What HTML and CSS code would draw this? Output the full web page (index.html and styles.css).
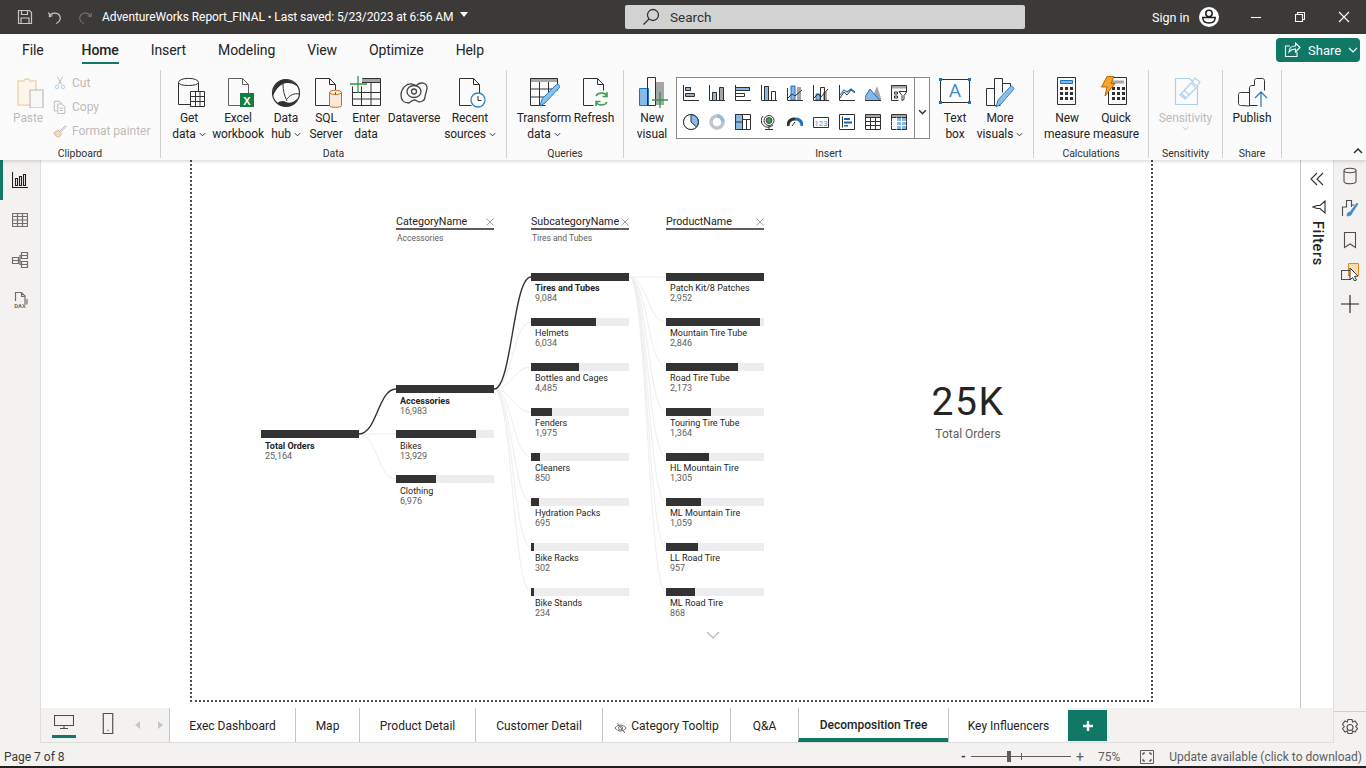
FILE: index.html
```html
<!DOCTYPE html>
<html lang="en">
<head>
<meta charset="utf-8">
<title>AdventureWorks Report_FINAL</title>
<link rel="stylesheet" href="styles.css">
</head>
<body>
<div class="app">
  <header class="titlebar">
    <div class="qa">
      <svg class="i15" viewBox="0 0 16 16"><path class="tl" d="M1.500 1.500h11l2 2v11h-13zM4.500 1.500v4h6v-4M4 14.500v-5.500h8v5.500"/></svg>
      <svg class="i15" viewBox="0 0 16 16"><path class="tl" d="M3 7l-1.500-3.500M2 8l3.500-1.500M2 7.500c2-4 9-5 11 0 1 3-1 6-4 7"/></svg>
      <svg class="i15" viewBox="0 0 16 16"><path class="tm" d="M14 8l-3.500-1.500M14 8l.5-4M14 7.500c-2-4-9-5-11 0-1 3 1 6 4 7"/></svg>
    </div>
    <div class="doc-title">AdventureWorks Report_FINAL <span class="dot">•</span> Last saved: 5/23/2023 at 6:56 AM</div>
    <span class="title-caret"></span>
    <div class="search">
      <svg class="i18" viewBox="0 0 18 18"><circle class="sr" cx="11" cy="7" r="5.500"/><path class="sr" d="M7 11l-5.500 5.500"/></svg>
      <span>Search</span>
    </div>
    <div class="signin">
      <span>Sign in</span>
      <svg class="i20" viewBox="0 0 20 20"><circle cx="10" cy="10" r="10" class="wf"/><circle class="bs" cx="10" cy="6.500" r="3.200"/><path class="bs" d="M3.800 10.500h12.400c0 3.500-2.500 5.500-6.200 5.500s-6.200-2-6.200-5.500z"/></svg>
    </div>
    <div class="winctl">
      <svg class="i12" viewBox="0 0 12 12"><path class="wl" d="M1 6.500h10"/></svg>
      <svg class="i12" viewBox="0 0 12 12"><path class="wl" d="M1.500 3.500h7v7h-7zM3.500 3.500v-2h7v7h-2"/></svg>
      <svg class="i12" viewBox="0 0 12 12"><path class="wl" d="M1 1l10 10M11 1l-10 10"/></svg>
    </div>
  </header>

  <section class="ribbon">
    <nav class="rtabs">
      <span class="rtab rtab-file">File</span>
      <span class="rtab rtab-on">Home</span>
      <span class="rtab">Insert</span>
      <span class="rtab">Modeling</span>
      <span class="rtab">View</span>
      <span class="rtab">Optimize</span>
      <span class="rtab">Help</span>
      <button class="share">
        <svg class="i18" viewBox="0 0 18 18"><path class="wl" d="M7 5H2.500v10.500H14V11M6 11c0-4 3-6 6.500-6V2l4.500 4.500-4.500 4.500V8C9.500 8 7.500 9 6 11z"/></svg>
        <span>Share</span>
        <svg class="i10" viewBox="0 0 10 10"><path class="wl" d="M1 3l4 4 4-4"/></svg>
      </button>
    </nav>
    <div class="groups">
      <div class="group g-clip">
        <div class="gbody clip-body">
          <div class="btn btn-off">
            <svg class="ico" viewBox="0 0 32 32"><path class="po" d="M6 5h6c0-3 6-3 6 0h6v24H6z"/><path class="pf" d="M18 14h13v18H18z"/><path class="dl" d="M18 14h13v18H18z"/></svg>
            <span class="lb">Paste</span>
          </div>
          <div class="clip-list">
            <div class="mini"><svg class="i14" viewBox="0 0 14 16"><path class="dg" d="M4 1l5 9M10 1l-5 9"/><circle class="db" cx="3.500" cy="12.500" r="2"/><circle class="db" cx="10.500" cy="12.500" r="2"/></svg><span>Cut</span></div>
            <div class="mini"><svg class="i14" viewBox="0 0 14 16"><path class="dg" d="M.5 1.500h6l2 2v1M.5 1.500v11h3M4.500 4.500h5l3 3v8h-8zM6.500 9.500h4M6.500 12h4"/></svg><span>Copy</span></div>
            <div class="mini"><svg class="i14" viewBox="0 0 16 16"><path class="df" d="M1 10l5-3 4 4-3 4c-3 0-5-2-6-5z"/><path class="dg" d="M8 8l6-6 1 1-6 6"/></svg><span>Format painter</span></div>
          </div>
        </div>
        <div class="glabel">Clipboard</div>
      </div>

      <div class="group g-data">
        <div class="gbody data-body">
          <div class="btn">
            <svg class="ico" viewBox="0 0 32 32"><path class="ln" d="M5.500 6.500c0-5.500 20-5.500 20 0v22h-20zM5.500 6.500c0 4 20 4 20 0"/><path class="wh" d="M17.500 15.500h14v15h-14z"/><path class="ln" d="M17.500 15.500h14v15h-14zM17.500 20.500h14M17.500 25.500h14M22.500 15.500v15M27 15.500v15"/></svg>
            <span class="lb">Get</span><span class="lb">data <svg class="car" viewBox="0 0 8 5"><path class="cl" d="M1 1l3 3 3-3"/></svg></span>
          </div>
          <div class="btn">
            <svg class="ico" viewBox="0 0 32 32"><path class="lg" d="M6.500 2.500h14l6 6v21h-20zM20.500 2.500v6h6"/><path class="xl" d="M18 17h14v14H18z"/><text class="xt" x="25" y="28.500">X</text></svg>
            <span class="lb">Excel</span><span class="lb">workbook</span>
          </div>
          <div class="btn">
            <svg class="ico" viewBox="0 0 32 32"><circle class="dr" cx="16" cy="17" r="13.500"/><path class="da" d="M3 20C2 10 9 3 16 3.500c5 .5 9 3 11.500 7-4-3-8-4-11-3.500C10 8 6 13 3 20z"/><path class="da" d="M7 27c3-2 6-3 9-1 4 2 8 0 12-4-2 5-7 8.500-12 8.500-4 0-7-1.500-9-3.500z"/><path class="lk" d="M13 8c0 6 1 11 4 17M17 23c3-4 7-6 12-5"/></svg>
            <span class="lb">Data</span><span class="lb">hub <svg class="car" viewBox="0 0 8 5"><path class="cl" d="M1 1l3 3 3-3"/></svg></span>
          </div>
          <div class="btn">
            <svg class="ico" viewBox="0 0 32 32"><path class="ln" d="M5.500 29.500v-27h14l6 6v21zM19.500 2.500v6h6"/><path class="or" d="M19.500 16.500c0-3 12-3 12 0v13c0 2.500-12 2.500-12 0zM19.500 16.500c0 2.500 12 2.500 12 0"/></svg>
            <span class="lb">SQL</span><span class="lb">Server</span>
          </div>
          <div class="btn">
            <svg class="ico" viewBox="0 0 32 32"><path class="gy" d="M12 2h18v4H12z"/><path class="ln" d="M2.500 10.500v19h28v-27h-18M2.500 16.500h28M2.500 23h28M11.500 10.500v19M21 6.500v23M12 6.500h18.500"/><path class="gn" d="M8 0v17M0 8h17"/></svg>
            <span class="lb">Enter</span><span class="lb">data</span>
          </div>
          <div class="btn">
            <svg class="ico" viewBox="0 0 32 32"><path class="sw" d="M11 27c-6 0-8-4-8-8 0-6 5-12 11-11 3 1 4 2 5 1 3-3 10-3 10 3 0 4-2 6-2 9 0 4-5 6-8 4-3-2-4-1-8 2z"/><ellipse class="sw" cx="16" cy="15.500" rx="7" ry="6"/><circle class="sw" cx="16" cy="15.500" r="2.500"/></svg>
            <span class="lb">Dataverse</span>
          </div>
          <div class="btn">
            <svg class="ico" viewBox="0 0 32 32"><path class="ln" d="M5.500 29.500v-27h14l6 6v12M19.500 2.500v6h6M5.500 29.500h12"/><circle class="cb" cx="24" cy="24" r="7"/><path class="ln" d="M24 20v4.500h3.500"/></svg>
            <span class="lb">Recent</span><span class="lb">sources <svg class="car" viewBox="0 0 8 5"><path class="cl" d="M1 1l3 3 3-3"/></svg></span>
          </div>
        </div>
        <div class="glabel">Data</div>
      </div>

      <div class="group g-query">
        <div class="gbody query-body">
          <div class="btn">
            <svg class="ico" viewBox="0 0 32 32"><path class="gy" d="M2 2h28v4H2z"/><path class="ln" d="M2.500 2.500h27v12M2.500 2.500v27h15M2.500 13h22M2.500 21h17M11.500 6v23M20.500 6v14"/><path class="pn" d="M12 30l2-7L28 9c1-1 2-1 3 0s1 2 0 3L17 27z"/></svg>
            <span class="lb">Transform</span><span class="lb">data <svg class="car" viewBox="0 0 8 5"><path class="cl" d="M1 1l3 3 3-3"/></svg></span>
          </div>
          <div class="btn">
            <svg class="ico" viewBox="0 0 32 32"><path class="ln" d="M5.500 29.500v-27h14l6 6v6M19.500 2.500v6h6M5.500 29.500h10"/><path class="gt" d="M18 20c2-4 9-4 11 0M29 26c-2 4-9 4-11 0M29 16v4.500h-4.500M18 30v-4.500h4.500"/></svg>
            <span class="lb">Refresh</span>
          </div>
        </div>
        <div class="glabel">Queries</div>
      </div>

      <div class="group g-insert">
        <div class="gbody insert-body">
          <div class="btn">
            <svg class="ico" viewBox="0 0 32 32"><path class="bf" d="M3.500 12.500h9v17h-9z"/><path class="gy" d="M20 6h8v23h-8z"/><path class="ln" d="M11.500 1.500h8v28h-8z"/><path class="gn" d="M24 16v17M16 24h16"/></svg>
            <span class="lb">New</span><span class="lb">visual</span>
          </div>
          <div class="gallery">
            <div class="gal-grid">
              <svg class="i16" viewBox="0 0 16 16"><path class="bf" d="M2.500 2.500h5v3h-5z"/><path class="gy" d="M2.500 8.500h9v3h-9z"/><path class="ln" d="M.5 0v15.500H16M2.500 2.500h5v3h-5zM2.500 8.500h9v3h-9z"/></svg>
              <svg class="i16" viewBox="0 0 16 16"><path class="bf" d="M3.500 7.500h4v8h-4z"/><path class="gy" d="M10.500 2.500h4v13h-4z"/><path class="ln" d="M.5 0v15.500H16M3.500 7.500h4v8h-4zM10.500 2.500h4v13h-4z"/></svg>
              <svg class="i16" viewBox="0 0 16 16"><path class="bf" d="M.5 2.500h14v3H.500z"/><path class="ln" d="M.5 0v15.500H16M.5 2.500h14v3H.500zM.5 8.500h9v3H.500z"/></svg>
              <svg class="i16" viewBox="0 0 16 16"><path class="bf" d="M3.500 1.500h4v14h-4z"/><path class="ln" d="M.5 0v15.500H16M3.500 1.500h4v14h-4zM10.500 6.500h4v9h-4z"/></svg>
              <svg class="i16" viewBox="0 0 16 16"><path class="bf" d="M4 1h4v14H4z"/><path class="gy" d="M10 2h4v13h-4z"/><path class="lk" d="M.5 3v12.500H16M1 13l4-4 3 2 7-6"/></svg>
              <svg class="i16" viewBox="0 0 16 16"><path class="bf" d="M3 9h4v6H3z"/><path class="gy" d="M10 7h4v8h-4z"/><path class="lk" d="M.5 0v15.500H16M7.500 2.500h4v13h-4zM1 13l4-4 3 3 7-8"/></svg>
              <svg class="i16" viewBox="0 0 16 16"><path class="ln" d="M.5 0v15.500H16M1 13l4-6 3 3 4-5 4 3"/><path class="bl" d="M1 10l4-5 3 2 4-3 4 3"/></svg>
              <svg class="i16" viewBox="0 0 16 16"><path class="gy" d="M8 11l4-10 4 12v3H9z"/><path class="bf" d="M0 15.500V12L5 4l4 5 3 3 3 3.500z"/><path class="ln" d="M0 15.500h16"/></svg>
              <svg class="i16" viewBox="0 0 16 16"><path class="gy" d="M.5.500h15v3H.500z"/><path class="lk" d="M.5 15.500V.500h15v6M.5 15.500h7M3.500 7h3v2h-3zM3.500 11h3v2h-3z"/><path class="lk" d="M8 6.500h8l-3 4v4l-2 1v-5z"/></svg>
              <svg class="i16" viewBox="0 0 16 16"><circle class="bf" cx="8" cy="8" r="7.500"/><path class="wh" d="M8 .5A7.500 7.500 0 0 0 .5 8 7.500 7.500 0 0 0 13.500 13L8 8z"/><circle class="lk" cx="8" cy="8" r="7.500"/><path class="lk" d="M8 1v7l5.500 5"/></svg>
              <svg class="i16" viewBox="0 0 16 16"><circle class="rg" cx="8" cy="8" r="6"/><path class="rb" d="M8 2a6 6 0 0 1 6 6"/></svg>
              <svg class="i16" viewBox="0 0 16 16"><path class="bf" d="M.5.500h7v15h-7z"/><path class="ln" d="M.5.500h15v15H.500zM7.500.500v15M.5 8h7M7.500 5.500h8M11.500 5.500v10"/></svg>
              <svg class="i16" viewBox="0 0 16 16"><circle class="ln" cx="8" cy="6.500" r="5"/><circle class="gb" cx="8" cy="6.500" r="3"/><path class="ln" d="M8 12v3M4 15.500h8M2 2a6.500 6.500 0 0 0 10 9"/></svg>
              <svg class="i16" viewBox="0 0 16 16"><path class="gu" d="M1 12c0-5 3-7 7-7"/><path class="gv" d="M8 5c4 0 7 2 7 7"/><path class="lk" d="M5 12l3-4"/></svg>
              <svg class="i16" viewBox="0 0 16 16"><path class="ln" d="M.5 3.500h15v10H.500z"/><text class="nm" x="8" y="11.500">123</text></svg>
              <svg class="i16" viewBox="0 0 16 16"><path class="ln" d="M.5.500h15v15H.500zM3.500 2.500v11"/><path class="bt" d="M5 4h6v2H5zM5 7.500h8v2H5zM5 11h4v1.500H5z"/></svg>
              <svg class="i16" viewBox="0 0 16 16"><path class="gy" d="M.5.500h15v3H.500z"/><path class="ln" d="M.5.500h15v15H.500zM.5 3.500h15M.5 7.500h15M.5 11.500h15M5.500 3.500v12M10.500 3.500v12"/></svg>
              <svg class="i16" viewBox="0 0 16 16"><path class="bf" d="M5.500 3.500h10v12h-10z"/><path class="gy" d="M.5.500h15v3H.500z"/><path class="ln" d="M.5.500h15v15H.500zM.5 3.500h15"/><path class="wd" d="M.5 7.500h15M.5 11.500h15M5.500 3.500v12M10.500 3.500v12"/></svg>
            </div>
            <div class="gal-more"><svg class="car2" viewBox="0 0 8 5"><path class="cl2" d="M1 1l3 3 3-3"/></svg></div>
          </div>
          <div class="btn">
            <svg class="ico" viewBox="0 0 32 32"><path class="tb" d="M1.500 3.500h29v23h-29z"/><path class="bd" d="M0 2h3v3H0zM29 2h3v3h-3zM0 25h3v3H0zM29 25h3v3h-3z"/><text class="ta" x="16" y="21">A</text></svg>
            <span class="lb">Text</span><span class="lb">box</span>
          </div>
          <div class="btn">
            <svg class="ico" viewBox="0 0 32 32"><path class="ln" d="M2.500 29.500v-17h8v17zM10.500 29.500v-27h8v14M18.500 7.500h8v5M10.500 29.500h6"/><path class="pn" d="M12 31l2-7L26 11c1-1 2-1 3 0s1 2 0 3L17 28z"/></svg>
            <span class="lb">More</span><span class="lb">visuals <svg class="car" viewBox="0 0 8 5"><path class="cl" d="M1 1l3 3 3-3"/></svg></span>
          </div>
        </div>
        <div class="glabel">Insert</div>
      </div>

      <div class="group g-calc">
        <div class="gbody calc-body">
          <div class="btn">
            <svg class="ico" viewBox="0 0 32 32"><path class="ln" d="M6.500 1.500h18v27h-18z"/><path class="bf" d="M9.500 4.500h12v3h-12z"/><path class="kk" d="M9 11h3v3H9zM14 11h3v3h-3zM19 11h3v3h-3zM9 16h3v3H9zM14 16h3v3h-3zM19 16h3v3h-3zM9 21h3v3H9zM14 21h3v3h-3zM19 21h3v3h-3z"/></svg>
            <span class="lb">New</span><span class="lb">measure</span>
          </div>
          <div class="btn">
            <svg class="ico" viewBox="0 0 32 32"><path class="ln" d="M8.500 1.500h18v27h-18z"/><path class="gy" d="M12 4.500h12v3H12z"/><path class="kk" d="M12 11h3v3h-3zM17 11h3v3h-3zM22 11h3v3h-3zM12 16h3v3h-3zM17 16h3v3h-3zM22 16h3v3h-3zM12 21h3v3h-3zM17 21h3v3h-3zM22 21h3v3h-3z"/><path class="zp" d="M7 .5h7l-3 7h4L5 20l2-9H1.500z"/></svg>
            <span class="lb">Quick</span><span class="lb">measure</span>
          </div>
        </div>
        <div class="glabel">Calculations</div>
      </div>

      <div class="group g-sens">
        <div class="gbody sens-body">
          <div class="btn btn-off">
            <svg class="ico" viewBox="0 0 32 32"><path class="sb" d="M5.500 2.500h14l8 7v19h-22z"/><path class="sc" d="M10 19L21 7l5 5-11 11zM22 6l3-4 5 4-3 4zM11 17l5 5M14 14l5 5"/></svg>
            <span class="lb">Sensitivity</span>
            <span class="lb"><svg class="car" viewBox="0 0 8 5"><path class="cd" d="M1 1l3 3 3-3"/></svg></span>
          </div>
        </div>
        <div class="glabel">Sensitivity</div>
      </div>

      <div class="group g-share">
        <div class="gbody share-body">
          <div class="btn">
            <svg class="ico" viewBox="0 0 32 32"><path class="ln" d="M5.500 29.500h-1c-1 0-2-1-2-2v-9c0-1 1-2 2-2h9v13.500zM13.500 16.500v-5c0-1 1-2 2-2h3v-5c0-1 1-2 2-2h6c1 0 2 1 2 2v10M13.500 29.500h8"/><path class="ar" d="M25 31V16M19 22l6-6 6 6"/></svg>
            <span class="lb">Publish</span>
          </div>
        </div>
        <div class="glabel">Share</div>
      </div>
      <svg class="collapse" viewBox="0 0 10 6"><path class="cu" d="M1 5l4-4 4 4"/></svg>
    </div>
  </section>

  <div class="work">
    <aside class="lrail">
      <div class="lr-item lr-on"><svg class="i16" viewBox="0 0 16 16"><path class="bk" d="M.5 0v15.500H16M3.500 6.500h2v7h-2zM7.500 4.500h2v9h-2zM11.500 2.500h2v11h-2z"/></svg></div>
      <div class="lr-item"><svg class="i16" viewBox="0 0 16 16"><path class="gl" d="M.5 1.500h15v13H.500zM.5 4.500h15M.5 8h15M.5 11.500h15M5.500 1.500v13M10.500 1.500v13"/></svg></div>
      <div class="lr-item"><svg class="i18" viewBox="0 0 18 18"><path class="gl" d="M1.500 6.500h6v6h-6zM1.500 9.500h6M10.500 1.500h6v6h-6zM10.500 4.500h6M10.500 10.500h6v6h-6zM10.500 13.500h6M7.500 9.500H9V4.500h1.500M9 9.500v4h1.500"/></svg></div>
      <div class="lr-item"><svg class="i18" viewBox="0 0 18 18"><path class="gl" d="M4.500 10V1.500h6l3.500 3.500v8M10.500 1.500v4h3.500M16 8v5.500"/><text class="dx" x="9" y="16.500">DAX</text></svg></div>
    </aside>

    <div class="center">
      <div class="canvas-row">
        <main class="canvas">
          <div class="page">
            <div class="tree">
              <svg class="links" viewBox="0 0 503 430">
                <path class="lnk" d="M98 219H135"/>
                <path class="lnk" d="M98 219C116 219 117 264 135 264"/>
                <path class="lnk" d="M233 174C251 174 252 107 270 107"/>
                <path class="lnk" d="M233 174C251 174 252 152 270 152"/>
                <path class="lnk" d="M233 174C251 174 252 197 270 197"/>
                <path class="lnk" d="M233 174C251 174 252 242 270 242"/>
                <path class="lnk" d="M233 174C251 174 252 287 270 287"/>
                <path class="lnk" d="M233 174C251 174 252 332 270 332"/>
                <path class="lnk" d="M233 174C251 174 252 377 270 377"/>
                <path class="lnk" d="M368 62H405"/>
                <path class="lnk" d="M368 62C386 62 387 107 405 107"/>
                <path class="lnk" d="M368 62C386 62 387 152 405 152"/>
                <path class="lnk" d="M368 62C386 62 387 197 405 197"/>
                <path class="lnk" d="M368 62C386 62 387 242 405 242"/>
                <path class="lnk" d="M368 62C386 62 387 287 405 287"/>
                <path class="lnk" d="M368 62C386 62 387 332 405 332"/>
                <path class="lnk" d="M368 62C386 62 387 377 405 377"/>
                <path class="lnk-on" d="M98 219C116 219 117 174 135 174"/>
                <path class="lnk-on" d="M233 174C251 174 252 62 270 62"/>
              </svg>
              <div class="tcol tcol-root">
                <div class="node node-on"><div class="track"><div class="fill" style="width:100%"></div></div><div class="nm1">Total Orders</div><div class="nv">25,164</div></div>
              </div>
              <div class="tcol">
                <div class="thead"><div class="tname"><span>CategoryName</span><svg class="x" viewBox="0 0 8 8"><path class="xs" d="M.5.5l7 7M7.500.5l-7 7"/></svg></div><div class="tsub">Accessories</div></div>
                <div class="nodes-cat">
                  <div class="node node-on"><div class="track"><div class="fill" style="width:100%"></div></div><div class="nm1">Accessories</div><div class="nv">16,983</div></div>
                  <div class="node"><div class="track"><div class="fill" style="width:82%"></div></div><div class="nm1">Bikes</div><div class="nv">13,929</div></div>
                  <div class="node"><div class="track"><div class="fill" style="width:41.100%"></div></div><div class="nm1">Clothing</div><div class="nv">6,976</div></div>
                </div>
              </div>
              <div class="tcol">
                <div class="thead"><div class="tname"><span>SubcategoryName</span><svg class="x" viewBox="0 0 8 8"><path class="xs" d="M.5.5l7 7M7.500.5l-7 7"/></svg></div><div class="tsub">Tires and Tubes</div></div>
                <div class="node node-on"><div class="track"><div class="fill" style="width:100%"></div></div><div class="nm1">Tires and Tubes</div><div class="nv">9,084</div></div>
                <div class="node"><div class="track"><div class="fill" style="width:66.400%"></div></div><div class="nm1">Helmets</div><div class="nv">6,034</div></div>
                <div class="node"><div class="track"><div class="fill" style="width:49.400%"></div></div><div class="nm1">Bottles and Cages</div><div class="nv">4,485</div></div>
                <div class="node"><div class="track"><div class="fill" style="width:21.700%"></div></div><div class="nm1">Fenders</div><div class="nv">1,975</div></div>
                <div class="node"><div class="track"><div class="fill" style="width:9.400%"></div></div><div class="nm1">Cleaners</div><div class="nv">850</div></div>
                <div class="node"><div class="track"><div class="fill" style="width:7.700%"></div></div><div class="nm1">Hydration Packs</div><div class="nv">695</div></div>
                <div class="node"><div class="track"><div class="fill" style="width:3.300%"></div></div><div class="nm1">Bike Racks</div><div class="nv">302</div></div>
                <div class="node"><div class="track"><div class="fill" style="width:2.600%"></div></div><div class="nm1">Bike Stands</div><div class="nv">234</div></div>
              </div>
              <div class="tcol">
                <div class="thead"><div class="tname"><span>ProductName</span><svg class="x" viewBox="0 0 8 8"><path class="xs" d="M.5.5l7 7M7.500.5l-7 7"/></svg></div></div>
                <div class="node"><div class="track"><div class="fill" style="width:100%"></div></div><div class="nm1">Patch Kit/8 Patches</div><div class="nv">2,952</div></div>
                <div class="node"><div class="track"><div class="fill" style="width:96.400%"></div></div><div class="nm1">Mountain Tire Tube</div><div class="nv">2,846</div></div>
                <div class="node"><div class="track"><div class="fill" style="width:73.600%"></div></div><div class="nm1">Road Tire Tube</div><div class="nv">2,173</div></div>
                <div class="node"><div class="track"><div class="fill" style="width:46.200%"></div></div><div class="nm1">Touring Tire Tube</div><div class="nv">1,364</div></div>
                <div class="node"><div class="track"><div class="fill" style="width:44.200%"></div></div><div class="nm1">HL Mountain Tire</div><div class="nv">1,305</div></div>
                <div class="node"><div class="track"><div class="fill" style="width:35.900%"></div></div><div class="nm1">ML Mountain Tire</div><div class="nv">1,059</div></div>
                <div class="node"><div class="track"><div class="fill" style="width:32.400%"></div></div><div class="nm1">LL Road Tire</div><div class="nv">957</div></div>
                <div class="node"><div class="track"><div class="fill" style="width:29.400%"></div></div><div class="nm1">ML Road Tire</div><div class="nv">868</div></div>
                <svg class="more-down" viewBox="0 0 14 8"><path class="md" d="M1 1l6 6 6-6"/></svg>
              </div>
            </div>
            <div class="kpi">
              <div class="kpi-val">25K</div>
              <div class="kpi-lab">Total Orders</div>
            </div>
          </div>
        </main>
        <aside class="filters">
          <svg class="i14" viewBox="0 0 14 14"><path class="fc" d="M7 1L1 7l6 6M13 1L7 7l6 6"/></svg>
          <svg class="ifl" viewBox="0 0 14 14"><path class="fc" d="M13 1v12L8 8.500H5L1 7l4-1.500h3z"/></svg>
          <span class="filters-t">Filters</span>
        </aside>
      </div>
      <div class="tabbar">
        <div class="view-sw">
          <div class="vw vw-on"><svg class="imon" viewBox="0 0 20 16"><path class="vi" d="M.5 1.500h19v10H.500zM10 11.500v3M6 14.500h8"/></svg></div>
          <div class="vw"><svg class="iph" viewBox="0 0 10 20"><path class="vi" d="M.5.500h9v19h-9z"/><path class="vi" d="M4.500 16.500h1"/></svg></div>
          <div class="pg-arrows"><span class="ar-l"></span><span class="ar-r"></span></div>
        </div>
        <div class="ptabs">
          <div class="ptab">Exec Dashboard</div>
          <div class="ptab">Map</div>
          <div class="ptab">Product Detail</div>
          <div class="ptab">Customer Detail</div>
          <div class="ptab"><svg class="ieye" viewBox="0 0 14 12"><path class="ey" d="M1 6c3-4 8-4 11 0-3 4-8 4-11 0zM3 1l8 10"/><circle class="ey" cx="6.500" cy="6" r="2"/></svg>Category Tooltip</div>
          <div class="ptab">Q&amp;A</div>
          <div class="ptab ptab-on">Decomposition Tree</div>
          <div class="ptab">Key Influencers</div>
          <div class="padd"><svg class="i12" viewBox="0 0 12 12"><path class="pl" d="M6 1v10M1 6h10"/></svg></div>
        </div>
      </div>
    </div>

    <aside class="rrail">
      <div class="rr-item"><svg class="i18" viewBox="0 0 18 18"><path class="rl" d="M3 3.500c0-3 12-3 12 0v11c0 3-12 3-12 0zM3 3.500c0 3 12 3 12 0"/></svg></div>
      <div class="rr-item"><svg class="i18" viewBox="0 0 18 18"><path class="rl" d="M1.500 17v-9h4V1.500h5V8M10.500 6h3"/><path class="rb2" d="M6 17c0-3 1-4 3-4l7-9 1 1-6 9c0 2-2 3-5 3z"/></svg></div>
      <div class="rr-item"><svg class="i18" viewBox="0 0 18 18"><path class="rl" d="M3.500 1.500h11v15L9 13l-5.500 3.500z"/></svg></div>
      <div class="rr-item"><svg class="i18" viewBox="0 0 18 18"><path class="ro" d="M7.500.5h10v12h-10z"/><path class="rl" d="M.5 7.500h9v9h-9z"/><path class="rc" d="M9 5l8 8-3.500.5 2 3.500-2 1-2-3.500L9 17z"/></svg></div>
      <div class="rr-item"><svg class="i18" viewBox="0 0 18 18"><path class="bk" d="M9 0v18M0 9h18"/></svg></div>
      <div class="rr-gear"><svg class="i20" viewBox="0 0 20 20"><path class="rl" d="M8 1.500h4l.7 2.500 2.300-1 2.500 3.500-1.800 2 1.800 2-2.500 3.500-2.300-1-.7 2.500H8l-.7-2.500-2.300 1-2.500-3.500 1.800-2-1.800-2L5 3l2.300 1z"/><circle class="rl" cx="10" cy="9.500" r="3"/></svg></div>
    </aside>
  </div>

  <footer class="status">
    <span class="pg">Page 7 of 8</span>
    <div class="zoom">
      <span class="zm">-</span>
      <div class="slider"><span class="thumb"></span><span class="tick"></span></div>
      <span class="zp1">+</span>
      <span class="pct">75%</span>
      <svg class="i14" viewBox="0 0 14 14"><path class="zf" d="M.5.500h13v13H.500z"/><path class="zk" d="M3 5V3h2M9 3h2v2M11 9v2H9M5 11H3V9"/></svg>
      <span class="upd">Update available (click to download)</span>
    </div>
  </footer>
  <div class="taskstrip"></div>
</div>
</body>
</html>
```

FILE: styles.css
```css
*{box-sizing:border-box}
html,body{margin:0;padding:0;height:100%;overflow:hidden}
body{font-family:Roboto,"Liberation Sans",sans-serif;color:#252423;background:#fff}
svg{display:block;flex:none}
.app{width:1366px;height:768px;display:flex;flex-direction:column}
.i10{width:10px;height:10px}
.i12{width:12px;height:12px}
.i14{width:14px;height:14px}
.i15{width:16px;height:16px}
.i16{width:16px;height:16px}
.i18{width:18px;height:18px}
.i20{width:20px;height:20px}
.ico{width:32px;height:32px;margin-bottom:2px}

/* title bar */
.titlebar{height:34px;background:#3b3a39;display:flex;align-items:center;color:#fff;flex:none}
.titlebar>*{flex:none}
.qa{display:flex;gap:14px;padding-left:17px;width:102px}
.doc-title{font-size:12px;width:351px;white-space:nowrap;letter-spacing:-.07px}
.dot{font-size:11px}
.title-caret{width:0;height:0;border:4px solid transparent;border-top:5px solid #fff;border-bottom:0;margin:-6px 0 0 7px}
.search{margin-left:157px;width:400px;height:24px;background:#d2d2d2;border-radius:2px;display:flex;align-items:center;gap:10px;padding-left:17px;color:#323130;font-size:13.500px}
.signin{margin-left:127px;display:flex;align-items:center;gap:10px;font-size:12.500px;white-space:nowrap}
.winctl{margin-left:31px;display:flex;gap:32px}
.tl{fill:none;stroke:#c8c6c4;stroke-width:1.200}
.tm{fill:none;stroke:#6f6e6d;stroke-width:1.200}
.sr{fill:none;stroke:#323130;stroke-width:1.300}
.wf{fill:#fff}
.bs{fill:none;stroke:#201f1e;stroke-width:1.500}
.wl{fill:none;stroke:#fff;stroke-width:1.100}

/* ribbon */
.ribbon{height:126px;background:#fbfbfb;flex:none;box-shadow:0 1px 4px rgba(0,0,0,.18);position:relative;z-index:2}
.rtabs{height:36px;display:flex;align-items:flex-start;gap:32px;padding:4px 0 0 22px;font-size:14px;letter-spacing:-.1px;color:#252423}
.rtab{height:26px;line-height:24px;border-bottom:2px solid transparent}
.rtab-file{margin-right:6px}
.rtab-on{font-weight:500;border-bottom-color:#117865}
.share{margin-left:auto;margin-right:6px;width:84px;height:24px;border:0;border-radius:4px;background:#117865;color:#fff;font:13px Roboto,sans-serif;display:flex;align-items:center;gap:7px;padding:0 0 0 7px}
.groups{height:88px;display:flex;color:#252423}
.group{border-right:1px solid #d2d0ce;display:flex;flex-direction:column;justify-content:space-between}
.gbody{padding-top:6px;display:grid;align-items:start;justify-items:center}
.glabel{font-size:10.500px;line-height:14px;text-align:center;color:#323130;margin-bottom:-3px;letter-spacing:-.05px}
.g-clip{width:161px}
.clip-body{grid-template-columns:44px 1fr;padding-left:6px;justify-items:start}
.g-data{width:346px}
.data-body{padding-left:4px;grid-template-columns:48px 50px 46px 34px 46px 50px 62px}
.g-query{width:117px}
.query-body{padding-left:6px;grid-template-columns:62px 38px}
.g-insert{width:410px}
.insert-body{padding-left:12px;grid-template-columns:32px 262px 50px 40px;justify-items:center}
.g-calc{width:115px}
.calc-body{padding-left:9px;grid-template-columns:48px 50px}
.g-sens{width:74px}
.sens-body{grid-template-columns:1fr}
.g-share{width:59px}
.share-body{grid-template-columns:1fr}
.btn{display:flex;flex-direction:column;align-items:center;width:100%}
.lb{font-size:12px;line-height:16px;letter-spacing:-.1px;white-space:nowrap;display:flex;align-items:center;gap:3px}
.btn-off .lb{color:#bdbbb9}
.car{width:7px;height:5px}
.cl{fill:none;stroke:#323130;stroke-width:1.100}
.cd{fill:none;stroke:#bdbbb9;stroke-width:1.100}
.clip-list{display:flex;flex-direction:column;gap:4px;padding-left:3px}
.mini{display:flex;align-items:center;gap:5px;height:20px;font-size:12px;color:#bdbbb9;white-space:nowrap}
.mini:first-child{margin-top:-3px}
.collapse{width:10px;height:6px;margin:78px 0 0 71px}
.cu{fill:none;stroke:#323130;stroke-width:1.500}

/* icon strokes */
.ln{fill:none;stroke:#323130;stroke-width:1}
.lk{fill:none;stroke:#323130;stroke-width:1}
.lg{fill:none;stroke:#605e5c;stroke-width:1}
.wh{fill:#fff;stroke:none}
.gy{fill:#a6a6a6}
.xl{fill:#107c41}
.xt{fill:#fff;font:700 11px "Liberation Sans",sans-serif;text-anchor:middle}
.da{fill:#323130}
.dr{fill:#fff;stroke:#323130;stroke-width:1.200}
.or{fill:#fbe9d7;stroke:#c8691c;stroke-width:1}
.gn{fill:none;stroke:#339947;stroke-width:1.300}
.gt{fill:none;stroke:#3c9a4e;stroke-width:1.500}
.sw{fill:none;stroke:#484644;stroke-width:1.300}
.cb{fill:#fff;stroke:#2f84c9;stroke-width:1.300}
.pn{fill:#8cc0ea;stroke:#2f7fc4;stroke-width:1}
.bf{fill:#86b9e8;stroke:#1a73c0;stroke-width:1}
.bl{fill:none;stroke:#1a73c0;stroke-width:1.100}
.rg{fill:none;stroke:#c4c4c4;stroke-width:3.500}
.rb{fill:none;stroke:#8cc0ea;stroke-width:3.500}
.gb{fill:#3c9a4e;stroke:#323130;stroke-width:.8}
.gu{fill:none;stroke:#323130;stroke-width:3}
.gv{fill:none;stroke:#1a73c0;stroke-width:3}
.nm{fill:#5a9ad8;font:400 8px Roboto,sans-serif;text-anchor:middle}
.bt{fill:#1069b5}
.wd{fill:none;stroke:#fff;stroke-width:1}
.tb{fill:#fff;stroke:#323130;stroke-width:1}
.bd{fill:#1a73c0}
.ta{fill:#3f8fd3;font:400 19px Roboto,sans-serif;text-anchor:middle}
.kk{fill:#323130}
.zp{fill:#f5a623;stroke:#c1600f;stroke-width:1}
.sb{fill:none;stroke:#a9d0ee;stroke-width:1.200}
.sc{fill:#fff;stroke:#a9d0ee;stroke-width:1.200}
.ar{fill:none;stroke:#2f7fc4;stroke-width:1.300}
.po{fill:#fdf5e9;stroke:#f0d6b0;stroke-width:1.500}
.pf{fill:#f8f8f8}
.dl{fill:none;stroke:#b8b6b4;stroke-width:1.100}
.dg{fill:none;stroke:#b8b6b4;stroke-width:1}
.db{fill:none;stroke:#a9cbe6;stroke-width:1}
.df{fill:#f4dcba;stroke:#c8b79f;stroke-width:1}

/* gallery */
.gallery{margin-top:1px;width:254px;height:62px;border:1.500px solid #8a8886;display:flex;background:#fff;justify-self:end}
.gal-grid{width:237px;display:grid;grid-template-columns:repeat(9,26px);grid-auto-rows:29px;justify-items:center;align-items:center;padding-left:1px}
.gal-more{flex:1;border-left:1.500px solid #8a8886;display:flex;align-items:center;justify-content:center;padding-top:8px}
.car2{width:9px;height:6px}
.cl2{fill:none;stroke:#323130;stroke-width:1.300}

/* work area */
.work{flex:1;display:flex;min-height:0;background:#f3f2f1}
.lrail{width:41px;flex:none;background:#f3f2f1;border-right:1px solid #e1dfdd}
.lr-item{height:40px;display:flex;align-items:center;justify-content:center}
.lr-on{box-shadow:inset 3px 0 0 #117865}
.bk{fill:none;stroke:#201f1e;stroke-width:1.100}
.gl{fill:none;stroke:#6f6e6d;stroke-width:1.200}
.dx{fill:#6f6e6d;font:700 6px Roboto,sans-serif;text-anchor:middle}
.center{flex:1;display:flex;flex-direction:column;min-width:0}
.canvas-row{flex:1;display:flex;min-height:0}
.canvas{flex:1;background:#fff;padding-left:149px;min-width:0}
.page{width:963px;height:542px;border:2px dotted #4f4e4d;border-top:0;padding-left:69px;display:flex;align-items:flex-start}
.filters{width:33px;flex:none;background:#fff;border-left:1px solid #c8c6c4;display:flex;flex-direction:column;align-items:center;padding-top:12px}
.ifl{width:14px;height:14px;margin-top:14px;margin-left:4px}
.fc{fill:none;stroke:#323130;stroke-width:1.100}
.filters-t{writing-mode:vertical-rl;font-size:14.500px;font-weight:500;margin-top:7px;letter-spacing:.6px}

/* decomposition tree */
.tree{position:relative;margin-top:55px;display:flex;gap:37px;flex:none}
.links{position:absolute;left:0;top:0;width:503px;height:430px}
.lnk{fill:none;stroke:#eeeeee;stroke-width:1}
.lnk-on{fill:none;stroke:#333;stroke-width:1.400}
.tcol{width:98px;position:relative}
.tcol-root{padding-top:215px}
.thead{height:58px}
.tname{height:15px;padding-top:1px;border-bottom:2px solid #605e5c;display:flex;justify-content:space-between;align-items:center;font-size:10.700px;line-height:12px;color:#252423;white-space:nowrap}
.x{width:8px;height:8px;margin-top:-1px}
.xs{fill:none;stroke:#a19f9d;stroke-width:1}
.tsub{font-size:8.500px;line-height:12px;margin-top:2px;padding-left:1px;color:#605e5c}
.nodes-cat{padding-top:112px}
.node{height:45px}
.track{height:8px;background:#ededed}
.fill{height:8px;background:#333}
.nm1{font-size:9px;line-height:10px;margin-top:2px;padding-left:4px;white-space:nowrap;color:#252423}
.tcol-root .nm1,.nodes-cat .nm1{margin-top:3px}
.node-on .nm1{font-weight:700}
.nv{font-size:9px;line-height:10px;padding-left:4px;color:#605e5c}
.more-down{width:14px;height:8px;margin:-2px 0 0 40px}
.md{fill:none;stroke:#b8b6b4;stroke-width:1.200}
.kpi{margin:218px 0 0 104px;width:200px;text-align:center}
.kpi-val{font-size:39px;line-height:48px;font-weight:400;letter-spacing:1.500px;color:#252423}
.kpi-lab{font-size:12px;line-height:16px;color:#605e5c}

/* tab bar */
.tabbar{height:35px;flex:none;display:flex;background:#f3f2f1;border-bottom:1px solid #e1dfdd}
.view-sw{width:128px;flex:none;display:flex;align-items:stretch;padding-left:11px}
.vw{width:24px;display:flex;align-items:center;justify-content:center;padding-bottom:4px}
.vw+.vw{margin-left:20px}
.vw-on{border-bottom:3px solid #117865;margin-bottom:4px;padding-bottom:0}
.imon{width:20px;height:16px}
.vi{fill:none;stroke:#4f4e4d;stroke-width:1.100}
.iph{width:12px;height:21px}
.pg-arrows{display:flex;gap:18px;align-items:center;margin-left:15px}
.ar-l{width:0;height:0;border:4px solid transparent;border-right:5px solid #c8c6c4;border-left:0}
.ar-r{width:0;height:0;border:4px solid transparent;border-left:5px solid #c8c6c4;border-right:0}
.ptabs{display:grid;grid-template-columns:126px 64px 116px 127px 128px 68px 150px 120px 39px;height:34px}
.ptab{background:#fff;border-left:1px solid #c8c6c4;font-size:12px;display:flex;align-items:center;justify-content:center;white-space:nowrap;color:#252423;padding-top:2px}
.ptab-on{font-weight:500;border-bottom:4px solid #117865;padding-top:4px}
.padd{background:#117865;margin:2px 0 1px;display:flex;align-items:center;justify-content:center}
.pl{fill:none;stroke:#fff;stroke-width:2.400}
.ieye{width:14px;height:12px;margin-right:3px;margin-top:4px}
.ey{fill:none;stroke:#6f6e6d;stroke-width:1}

/* right rail */
.rrail{width:33px;flex:none;border-left:1px solid #e1dfdd;background:#f3f2f1;display:flex;flex-direction:column}
.rr-item{height:32px;display:flex;align-items:center;justify-content:center}
.rr-gear{margin-top:auto;height:32px;border-top:1px solid #d2d0ce;display:flex;align-items:center;justify-content:center}
.rl{fill:none;stroke:#4f4e4d;stroke-width:1.100}
.rb2{fill:#3f8fd3;stroke:#2f7fc4;stroke-width:.6}
.ro{fill:#f8dcaa;stroke:#e08a1e;stroke-width:1}
.rc{fill:#fff;stroke:#323130;stroke-width:1}

/* status */
.status{height:23px;flex:none;background:#f3f2f1;display:flex;align-items:center;justify-content:space-between;font-size:12px;color:#605e5c;padding:4px 0 0 4px}
.pg{color:#3b3a39}
.zoom{display:flex;align-items:center;padding-right:4px}
.zm{width:5px;font-weight:700;color:#323130}
.slider{position:relative;width:100px;height:1px;background:#605e5c;margin-left:5px}
.thumb{position:absolute;left:36px;top:-5px;width:4px;height:11px;background:#605e5c}
.tick{position:absolute;left:50px;top:-3px;width:1px;height:7px;background:#605e5c}
.zp1{margin:0 14px 0 5px;font-size:14px}
.pct{margin-right:20px}
.zf{fill:none;stroke:#605e5c;stroke-width:1}
.zk{fill:none;stroke:#323130;stroke-width:1}
.upd{margin-left:15px;white-space:nowrap}
.taskstrip{height:2px;background:#201f1e;flex:none}
```
